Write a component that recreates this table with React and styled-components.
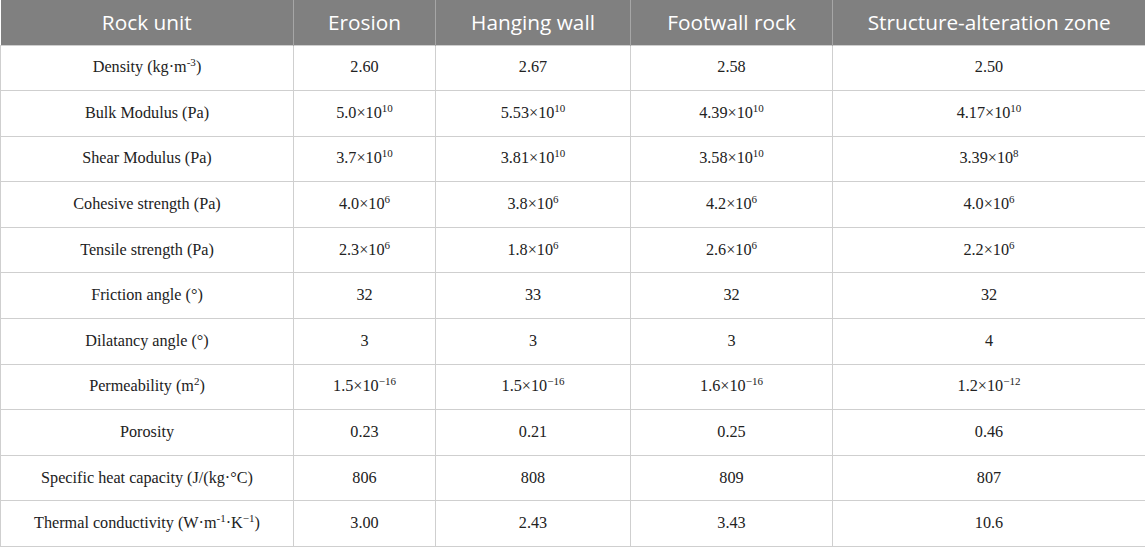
import React from "react";
import styled, { createGlobalStyle } from "styled-components";

const GlobalStyle = createGlobalStyle`
  html, body {
    margin: 0;
    padding: 0;
    background: #ffffff;
  }
`;

const Table = styled.table`
  width: 1145px;
  table-layout: fixed;
  border-collapse: collapse;
  border-spacing: 0;
`;

const HeadRow = styled.tr`
  height: 45px;
  background: #808080;
`;

const HeadCell = styled.th`
  padding: 0 4px;
  font-family: "Open Sans", "Liberation Sans", sans-serif;
  font-size: 20.8px;
  font-weight: 400;
  color: #ffffff;
  text-align: center;
  vertical-align: middle;
  border-left: 1px solid #a6a6a6;
  white-space: nowrap;

  &:first-child {
    border-left: none;
  }
`;

const BodyRow = styled.tr`
  height: 45.6px;
`;

const Cell = styled.td`
  padding: 0 8px;
  font-family: "Liberation Serif", "Times New Roman", serif;
  font-size: 16.2px;
  color: #222222;
  text-align: center;
  vertical-align: middle;
  border: 1px solid #cfcfcf;
  white-space: nowrap;
`;

const Sup = styled.sup`
  font-size: 0.68em;
  line-height: 0;
  vertical-align: 0.55em;
`;

const columns = [
  { label: "Rock unit", width: 293 },
  { label: "Erosion", width: 142 },
  { label: "Hanging wall", width: 195 },
  { label: "Footwall rock", width: 202 },
  { label: "Structure-alteration zone", width: 313 },
];

const Pow = ({ base, exp }) => (
  <>
    {base}×10<Sup>{exp}</Sup>
  </>
);

const rows = [
  [<>Density (kg·m<Sup>-3</Sup>)</>, "2.60", "2.67", "2.58", "2.50"],
  [
    "Bulk Modulus (Pa)",
    <Pow base="5.0" exp="10" />,
    <Pow base="5.53" exp="10" />,
    <Pow base="4.39" exp="10" />,
    <Pow base="4.17" exp="10" />,
  ],
  [
    "Shear Modulus (Pa)",
    <Pow base="3.7" exp="10" />,
    <Pow base="3.81" exp="10" />,
    <Pow base="3.58" exp="10" />,
    <Pow base="3.39" exp="8" />,
  ],
  [
    "Cohesive strength (Pa)",
    <Pow base="4.0" exp="6" />,
    <Pow base="3.8" exp="6" />,
    <Pow base="4.2" exp="6" />,
    <Pow base="4.0" exp="6" />,
  ],
  [
    "Tensile strength (Pa)",
    <Pow base="2.3" exp="6" />,
    <Pow base="1.8" exp="6" />,
    <Pow base="2.6" exp="6" />,
    <Pow base="2.2" exp="6" />,
  ],
  ["Friction angle (°)", "32", "33", "32", "32"],
  ["Dilatancy angle (°)", "3", "3", "3", "4"],
  [
    <>Permeability (m<Sup>2</Sup>)</>,
    <Pow base="1.5" exp="−16" />,
    <Pow base="1.5" exp="−16" />,
    <Pow base="1.6" exp="−16" />,
    <Pow base="1.2" exp="−12" />,
  ],
  ["Porosity", "0.23", "0.21", "0.25", "0.46"],
  ["Specific heat capacity (J/(kg·°C)", "806", "808", "809", "807"],
  [
    <>Thermal conductivity (W·m<Sup>-1</Sup>·K<Sup>−1</Sup>)</>,
    "3.00",
    "2.43",
    "3.43",
    "10.6",
  ],
];

export default function App() {
  return (
    <>
      <GlobalStyle />
      <Table>
        <colgroup>
          {columns.map((c) => (
            <col key={c.label} style={{ width: c.width }} />
          ))}
        </colgroup>
        <thead>
          <HeadRow>
            {columns.map((c) => (
              <HeadCell key={c.label}>{c.label}</HeadCell>
            ))}
          </HeadRow>
        </thead>
        <tbody>
          {rows.map((r, i) => (
            <BodyRow key={i}>
              {r.map((cell, j) => (
                <Cell key={j}>{cell}</Cell>
              ))}
            </BodyRow>
          ))}
        </tbody>
      </Table>
    </>
  );
}
